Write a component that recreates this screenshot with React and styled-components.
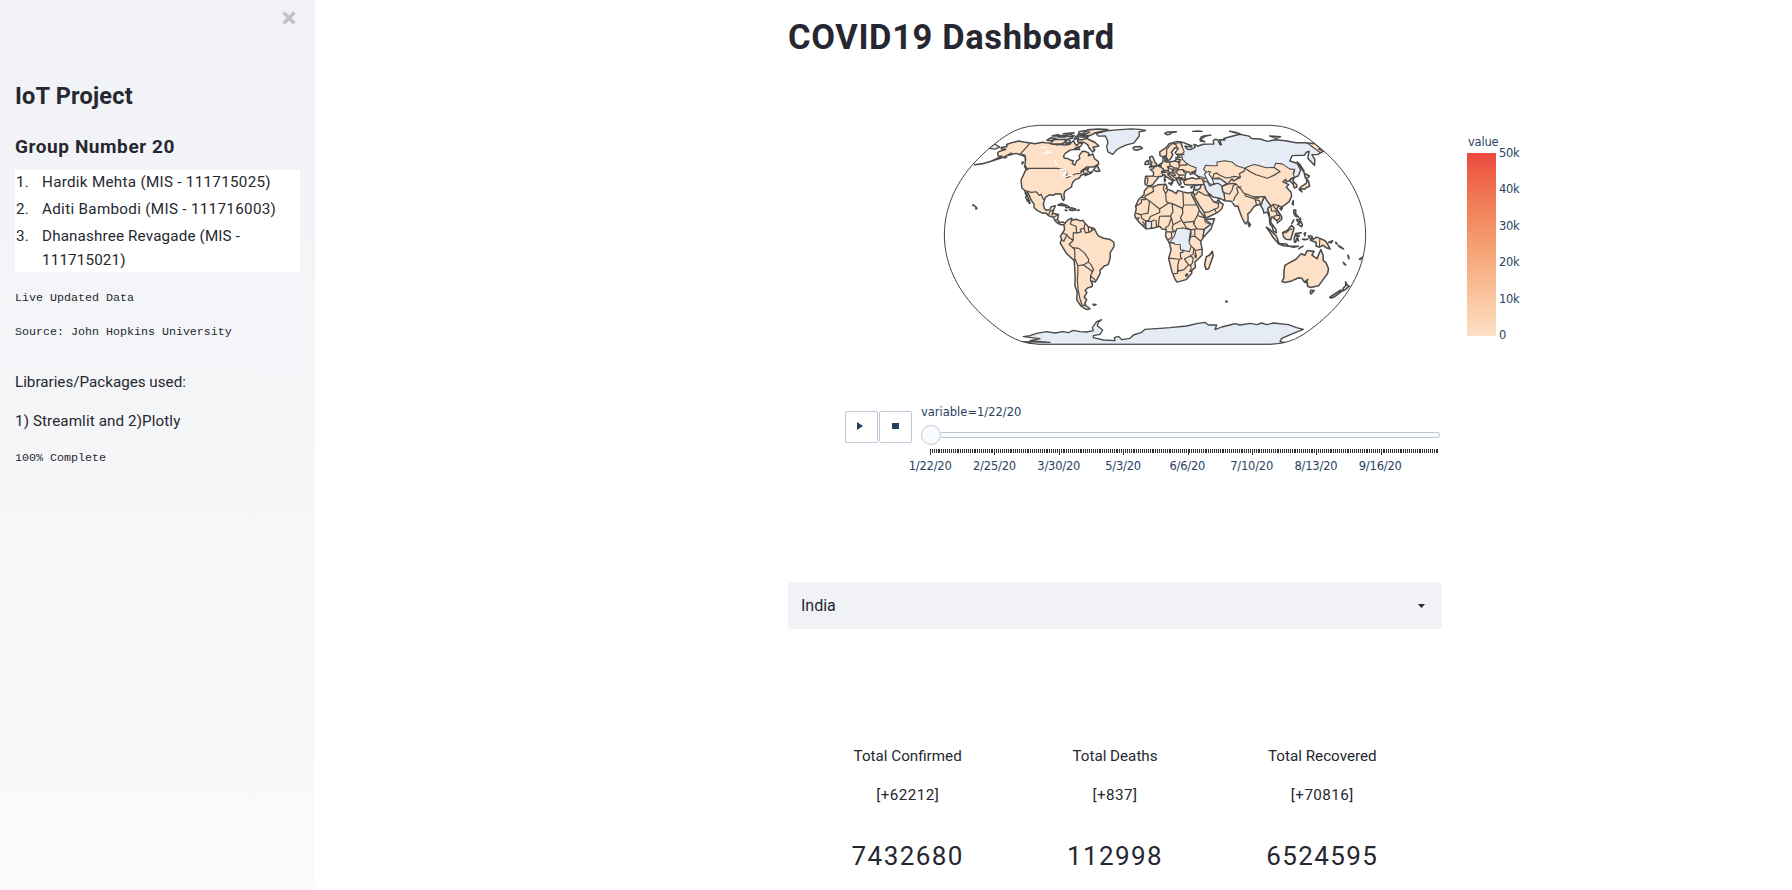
import React from "react";
import styled, { createGlobalStyle } from "styled-components";

const GlobalStyle = createGlobalStyle`
  * { box-sizing: border-box; }
  html, body { margin: 0; padding: 0; background: #fff; }
  body {
    font-family: Roboto, "Noto Sans", sans-serif;
    font-size: 16px;
    color: #262730;
    overflow: hidden;
  }
`;

const Page = styled.div`
  display: flex;
  height: 890px;
  width: 1792px;
`;

/* ---------- sidebar ---------- */

const Sidebar = styled.aside`
  width: 315px;
  padding: 11px 15px 0;
  background: linear-gradient(#f0f2f6, #fafafa);
  display: flex;
  flex-direction: column;
`;

const CloseButton = styled.button`
  align-self: flex-end;
  width: 14px;
  height: 14px;
  margin-right: 4px;
  padding: 0;
  border: 0;
  background: none;
  display: flex;
`;

const SideTitle = styled.h1`
  margin: 55px 0 0;
  font-size: 23.5px;
  line-height: 32px;
  font-weight: 700;
  letter-spacing: 0.2px;
`;

const SideSubtitle = styled.h2`
  margin: 21px 0 0;
  font-size: 19px;
  line-height: 28px;
  font-weight: 700;
  letter-spacing: 0.58px;
`;

const Members = styled.ol`
  list-style: none;
  counter-reset: member;
  margin: 9px 0 0;
  padding: 0;
  height: 102px;
  background: #fff;
`;

const Member = styled.li`
  counter-increment: member;
  display: flex;
  font-size: 15.2px;
  line-height: 24px;
  margin-bottom: 3px;
  letter-spacing: ${(p) => p.$track || 0}px;
  &::before {
    content: counter(member) ".";
    width: 26px;
    padding-left: 1px;
    flex: none;
  }
`;

const Mono = styled.p`
  margin: ${(p) => p.$top}px 0 0;
  font-family: "Liberation Mono", monospace;
  font-size: 11.67px;
  line-height: 18px;
`;

const SideText = styled.p`
  margin: ${(p) => p.$top}px 0 0;
  font-size: 15.2px;
  line-height: 24px;
  letter-spacing: ${(p) => p.$track || 0}px;
`;

/* ---------- main column ---------- */

const Main = styled.main`
  width: 654px;
  margin-left: 473px;
  flex: none;
  display: flex;
  flex-direction: column;
`;

const Title = styled.h1`
  margin: 14px 0 0;
  font-size: 34.5px;
  line-height: 46px;
  font-weight: 700;
  letter-spacing: 0.62px;
`;

const ChartRow = styled.div`
  display: flex;
  align-items: flex-start;
  width: 760px;
  height: 345px;
  padding: 55px 0 0 152px;
`;

const WorldMap = styled.svg`
  display: block;
  flex: none;
`;

const Legend = styled.div`
  margin: 19px 0 0 97px;
  display: flex;
  flex-direction: column;
  color: #2a3f5f;
  font-family: "DejaVu Sans", sans-serif;
  font-size: 11.5px;
`;

const LegendTitle = styled.div`
  line-height: 16px;
  padding-left: 1px;
  letter-spacing: -0.2px;
`;

const LegendBody = styled.div`
  display: flex;
  margin-top: 3px;
`;

const ColorBar = styled.div`
  width: 29px;
  height: 183px;
  background: linear-gradient(
    to top,
    #fde0c5, #facba6, #f8b58b, #f59e72, #f2855d, #ef6a4c, #eb4a40
  );
`;

const Scale = styled.div`
  height: 196px;
  margin: -7px 0 0 3px;
  display: flex;
  flex-direction: column;
  justify-content: space-between;
  line-height: 14px;
  letter-spacing: -0.3px;
`;

const Controls = styled.div`
  display: flex;
  height: 78px;
  margin: 0 0 0 57px;
  width: 605px;
`;

const PlayButton = styled.button`
  width: 33px;
  height: 32px;
  margin: 6px 1px 0 0;
  padding: 0 ${(p) => p.$shift}px 3px 0;
  flex: none;
  border: 1px solid #bec8d9;
  border-radius: 2px;
  background: #fff;
  display: flex;
  align-items: center;
  justify-content: center;
`;

const Timeline = styled.div`
  margin-left: 8px;
  width: 519px;
  flex: none;
  color: #2a3f5f;
  font-family: "DejaVu Sans", sans-serif;
  font-size: 11.5px;
  display: flex;
  flex-direction: column;
`;

const Current = styled.div`
  line-height: 14px;
  height: 20px;
`;

const Track = styled.div`
  height: 20px;
  display: flex;
  align-items: center;
`;

const Knob = styled.div`
  width: 20px;
  height: 20px;
  flex: none;
  border: 1px solid #bec8d9;
  border-radius: 50%;
  background: #f8fafc;
`;

const Rail = styled.div`
  flex: 1;
  height: 6px;
  border: 1px solid #bec8d9;
  border-left: 0;
  border-radius: 0 3px 3px 0;
  background: #f8fafc;
`;

const Ticks = styled.svg`
  display: block;
  margin-top: 4px;
  flex: none;
`;

const Dates = styled.div`
  display: flex;
  margin: 4px 0 0 -23px;
  line-height: 14px;
  letter-spacing: -0.2px;
`;

const DateLabel = styled.span`
  width: 64.3px;
  flex: none;
  display: flex;
  justify-content: center;
`;

const Select = styled.div`
  margin-top: 99px;
  height: 47px;
  padding: 0 17px 0 13px;
  border-radius: 4px;
  background: #f0f2f6;
  display: flex;
  align-items: center;
  justify-content: space-between;
`;

const Stats = styled.div`
  display: grid;
  grid-template-columns: repeat(3, 1fr);
  padding: 0 16px;
  margin-top: 115px;
`;

const Stat = styled.div`
  display: flex;
  flex-direction: column;
  align-items: center;
  font-size: 15.2px;
`;

const StatLabel = styled.div`
  line-height: 24px;
`;

const StatDelta = styled.div`
  margin-top: 15px;
  line-height: 24px;
  letter-spacing: 0.45px;
`;

const StatTotal = styled.div`
  margin-top: 29px;
  font-size: 26px;
  line-height: 40px;
  letter-spacing: 1.4px;
`;

/* ---------- world map ---------- */

// Natural Earth projection; one map unit is a third of a pixel.
const K = 231;
const project = (lon, lat) => {
  const l = (lon * Math.PI) / 180;
  const p = (lat * Math.PI) / 180;
  const p2 = p * p;
  const p4 = p2 * p2;
  const x = l * (0.8707 - 0.131979 * p2 + p4 * (-0.013791 + p4 * (0.003971 * p2 - 0.001529 * p4)));
  const y = p * (1.007226 + p2 * (0.015085 + p4 * (-0.044475 + 0.028874 * p2 - 0.005916 * p4)));
  return [645 + K * x, 359.5 - K * y];
};

const toPath = (text, closed = true) =>
  text
    .split(";")
    .map((part) => {
      const pts = part.trim().split(/\s+/).map((s) => project(...s.split(",").map(Number)));
      return "M" + pts.map(([x, y]) => x.toFixed(1) + " " + y.toFixed(1)).join("L") + (closed ? "Z" : "");
    })
    .join("");

const meridian = (lon, from, to) => {
  const out = [];
  const n = 60;
  for (let i = 0; i <= n; i++) out.push(lon + "," + (from + ((to - from) * i) / n));
  return out.join(" ");
};
const FRAME = toPath(meridian(-180, -90, 90) + " " + meridian(180, 90, -90));

const AMERICAS =
  "-168,65.7 -163,66.6 -166,68.3 -161,70.3 -156.6,71.3 -150,70.5 -141,69.6 -135,69 -128,70.2 -124,69.8 -120,69.6 -115,68.8 -108,67.9 -108,68.5 -101,67.8 -96,68.2 -94,71.8 -91,69.6 -87,67.3 -85.5,69.8 -81.5,69 -82,66.5 -87,65 -87,64.2 -91,63.5 -94,61 -94.6,58.8 -92.5,57 -88,56.5 -85,55.3 -82.2,54.9 -82.2,52.9 -79,51.5 -78.9,54.6 -76.6,56.5 -78.5,59 -77.5,62.5 -73.5,62.3 -69.6,61 -69,58.9 -65,60.3 -61.5,56.5 -57,54.5 -55.7,52.3 -60,50.2 -66.5,50.2 -71,46.9 -64.5,49.1 -65,47.2 -61.5,45.8 -60,46.8 -60.5,45.6 -65.8,43.6 -66,44.6 -64.5,45.5 -67,44.8 -70,43.7 -70.5,42 -74,40.6 -75.5,39 -76,37 -75.7,35.4 -78,33.9 -81,32 -81.3,30 -80.1,26.8 -80.6,25.2 -81.8,26.2 -82.8,28 -84,30 -89,30.3 -90,29.2 -94,29.5 -97.2,27.6 -97.8,22.5 -96,19.2 -94.5,18.2 -91.5,18.5 -90.5,20.8 -87,21.4 -88,18.3 -88.8,15.9 -83.3,15 -83.7,11 -81.5,9 -79.5,9.6 -77.3,8.6 -75,10.8 -71.7,12.4 -71.5,10.8 -68,11.5 -64,10.3 -61.8,10.7 -60,8.5 -57,6 -52,4.8 -50,1.5 -48.5,-0.8 -44,-2.5 -39,-3.2 -35.3,-5.3 -35,-8.5 -38.5,-13 -39,-17.8 -41,-22 -44.5,-23 -48.5,-26 -48.7,-28.5 -52.5,-33 -54,-34.7 -58,-34 -57,-36.5 -58,-38.2 -62,-39 -65,-41 -63.8,-42.5 -67.5,-46 -65.8,-47.8 -69,-51 -68.3,-52.5 -65.3,-54.8 -69,-55.5 -73.5,-52.5 -75.5,-48 -72.7,-42 -73.5,-37.5 -71.5,-31 -70.2,-19 -76.2,-14 -81.2,-6 -79.8,-3 -80.9,-1 -78.8,1.5 -77.3,4 -78,7.4 -80.3,7.4 -83,8.3 -85.7,10.2 -87.6,13 -91.5,14 -94.5,16.2 -97,15.9 -101.8,17.8 -105.5,20.2 -105.8,22.5 -109.3,25.7 -112.8,30 -114.7,31.7 -114.7,30.2 -112.8,27.8 -111,25.5 -109.5,23.2 -110.2,23.2 -112.2,25.8 -112.2,24.8 -114.8,27.7 -114.1,28.7 -116,30.5 -117.2,32.6 -120.6,34.5 -122.5,37.5 -124.3,40.4 -124.6,48.3 -122.8,48.3 -127.5,51 -130.3,54.6 -133.5,58 -138,59.3 -146,60.8 -151.8,59.3 -151,61 -156,57.4 -164.5,54.6 -158,58.6 -162,58.7 -165.5,61 -166,62 -161,64.2 -166.5,64.6";

const AFRICA =
  "-5.9,35.8 -2,35.1 3,36.9 10,37.3 11,35 10,34 15.2,32.3 19,30.3 20.5,32.7 25,31.6 29,30.8 32.3,31.2 34.2,31.3 32.5,29.8 35.5,24 37.3,21 38.5,18 43,12.5 43.3,11.5 51.2,11.9 48,4.5 41.6,-1.6 39,-5 40.6,-11 40.6,-15 34.8,-20 35.5,-24 32.7,-26 32.5,-28.5 28,-33 20,-34.8 18.2,-33 15,-27 11.8,-17.5 13.8,-11 12.2,-6 9,-1 9.7,4 6,4.3 4,6.3 -2,4.8 -7.6,4.4 -13.2,8.9 -16.8,12.5 -17.5,14.7 -16.3,19 -17,21 -14.5,26 -9.8,29.5 -9.5,32.5";

const EURASIA =
  "-9.4,38.8 -8.8,43.2 -1.7,43.4 -1.2,46 -4.7,48.4 -1.5,48.7 -1.7,49.7 2,51 4.5,52.2 8,53.8 8.2,57 10.6,57.7 9.8,55 11,54 14,54 19,54.5 21,55.5 21.5,57.5 24.3,57.3 23.5,59.2 30,60 25,60.2 22.5,60 21.3,61.5 25.3,65 22,65.7 17.2,61.5 18.8,60 16.5,57 14.2,55.4 12.9,55.5 11,59 8,58 5.2,59 5,62 12,65.5 16,69 25.5,71 31,70.3 41,67 40,66.2 33,66.7 35,64.3 38,64 40.5,64.7 44,66 43.5,68.3 46,67.8 47,66.8 54,68.5 60,68.6 66,68.8 67,71.5 70,73 72.8,72.5 72.5,68 74,68 75,72.5 81,72.2 81,73.6 87,74.8 104,77.6 113,75.8 113.5,73.6 123,73.1 129,71 140,72.5 150,71.5 160,69.8 170,69.8 180,69 180,65 177,64.5 179,62.5 170,60 163.5,59.8 162,56 156.8,51.2 156,57 164,62.5 160,61.7 155,59.3 142,59 135.5,54.8 141,53 140.5,48 135,43.5 130.7,42.3 127.5,39.8 129.4,37 129,35.2 126.3,34.5 126.5,37 125,39.7 121.2,39 121.7,40.9 118,39 122.4,37 119.2,35 121.9,31.5 121.5,28.5 118,24.5 114,22.3 110,20.4 108,21.6 105.7,19 109.2,13.5 109,11.5 105,8.7 104.8,10.5 102.2,12.2 100.9,13.4 99.9,12 99.3,9.3 103.4,4 103.8,1.4 101,2.9 100.3,6 98.4,8 98.5,13 97.3,16.8 94.2,16 94,18.5 91.8,22.5 87,21.3 85,19.5 82,16.5 80.2,15.5 80.2,13 79.8,10.3 77.5,8 76.3,10 74.8,13 72.8,19 72.5,21.2 70,21 69,22.3 67,24.8 61.5,25.1 57,27 51.5,27.9 48.8,30.3 48,29.5 50,26.5 51.5,24.6 54,24.1 56.3,26.2 56.7,24.2 59.8,22.5 57.8,19 55,17 52,15.6 45,12.8 43.4,12.8 42.5,16.5 39,21.3 35,28 34.9,29.5 34.2,31.3 36,36 36,36.8 30.6,36.7 27.3,37 26.2,39.4 29.5,40.8 31.5,41.3 35,42 38.5,41 41.5,41.6 39,44 37,45.2 39,47.2 35,46.2 36.5,45.3 33.5,44.5 33,46.1 30.8,46.6 28.8,44.8 28,42.2 29,41.2 26,40.7 23,40.4 24,37.8 22.5,36.5 21,38.5 19.4,41.5 14,45 12.3,45.4 12.4,44.2 16,41.5 18.4,40 16.8,40.5 16,38 15.6,40.1 10.5,42.8 8.8,44.4 6,43 3,43 3,41.8 -0.3,39 -2,36.7 -5.6,36 -9,37";

const ISLANDS = [
  // Canadian Arctic and Atlantic
  "-117,69 -113,68.6 -105,69 -102,70 -105,73 -110,72.7 -117,73 -118,71",
  "-125,72 -120,71.5 -116,73.5 -123,74.3",
  "-101,69.6 -96,69.5 -98,71.5 -102,72.8 -97,73.8 -103,73",
  "-90,72.5 -88,70.5 -80,70 -75,68 -72,65.5 -66,62 -64.5,63.5 -68,66 -62,67 -68,70 -77,72.7 -81,73.7 -85,72.5",
  "-87,64 -81,64 -84,66",
  "-95,75.2 -80,74.8 -80,76 -92,77",
  "-116,75 -107,75 -105,76.3 -115,76.5",
  "-104,75.5 -98,75 -98,76.5",
  "-94,77.5 -96,80 -90,81.3 -88,78.3",
  "-113,78 -103,77.6 -101,79",
  "-124,76 -117,76 -118,77.3",
  "-94,73 -90,73.8 -95,74",
  "-99,68.8 -95,68.9 -97,69.4",
  "-90,76.5 -78,76.5 -75,78.8 -64,81.5 -62,82.6 -75,83.1 -88,82.2 -90,80.4 -82,79.5",
  "-59.3,47.7 -57,51.5 -55.6,50 -52.8,47 -56,46.8",
  "-128,50.8 -123.5,48.4 -125.5,49",
  "-132.8,54 -131.5,53.8 -131.5,52.4",
  "-154,57.8 -152.3,58 -153.5,57",
  "-178,51.8 -172,52.4 -168,53.3 -165,54.3 -170,52.8",
  // Caribbean
  "-84.9,21.9 -82,23.1 -77,21.7 -74.3,20.2 -77.5,19.9 -78.5,21.5",
  "-74.4,18.4 -73,19.9 -69,19 -68.5,18.3 -71.5,17.9",
  "-78,18.3 -76.4,17.9 -77.5,17.9",
  "-67,18.4 -65.7,18.3 -67,18",
  // Pacific and southern specks
  "-156,20.2 -154.9,19.5 -155.8,19.1",
  "-159.5,22 -157.8,21.4 -156.3,20.8 -158.2,21.5",
  "-61,-51.4 -58,-51.5 -60,-52.2",
  "68.8,-48.8 70.3,-49.2 69,-49.6",
  // Europe
  "-24,65.5 -22,66.4 -16,66.5 -13.7,65 -18.5,63.5 -22.5,63.9",
  "-5.5,50 -3,51.4 -5,52 -3,53.5 -5,55 -5.5,58 -3,58.5 -1.8,57.4 0,53.5 1.6,52.5 1,51.1",
  "-10,52 -9.5,54 -7,55.2 -6,53.5 -6.5,52.2",
  "12.5,38 15.5,38.2 15,36.7",
  "8.5,40.8 9.7,40.5 9,39",
  "8.7,42.4 9.4,42.8 9.3,41.5",
  "23.7,35.5 26.2,35.2 24,35",
  "32.4,35 34.4,35.6 33,34.6",
  "11.5,55.8 12.5,56 12,54.8 11,55.2",
  "12,78.5 16,79.9 27,80 20,79 18,77.5 15,77",
  // Asia
  "80,9.7 81.8,7.5 80.7,6 79.8,8",
  "108.7,19.5 111,20 109.6,18.3",
  "120.2,23 121.8,25.2 120.9,22",
  "130,33.2 132,31.6 131,34 135.5,33.6 137,34.7 140.8,35.8 142,39.6 141,41.3 139.8,38.5 136.8,37 133,35.4 131,34.3",
  "140.3,41.8 143,42 145.3,43.3 141.8,45.4 141,43",
  "120.5,18.4 122.2,18.3 121.5,15.5 123.8,13 121,13.8 120,16",
  "122,11.5 123.3,10.9 125.2,12.3 125,10.3 123.2,9.3 122,10.5",
  "122,7.7 125.5,9.6 126.3,7 125.4,5.8 124,7",
  "117.3,8.4 119.4,11 118.5,9.6",
  "109,1.5 113,3.2 117,7 119,5 117.5,1 116,-3.7 112,-3.3 110,-1.5",
  "95.3,5.6 98.5,3.8 103.8,-1 106,-5.8 104,-5 101,-2 98.5,1.7",
  "105.2,-6.5 108.5,-6.6 112.8,-6.8 114.5,-8.4 110,-8.1",
  "115,-8.4 119,-8.5 123,-8.5 119,-9.2",
  "123.5,-10.3 127,-8.4 125,-9.3",
  "119.4,-5.4 119,-2.5 120.2,1 125,1.6 121,0.5 121,-0.8 123.4,-0.7 121.7,-2 122.8,-4.6 121,-3 120.4,-5.5",
  "127.5,1 128.7,1.5 128,-0.7",
  "126,-3.3 130.7,-3.2 128,-3.6",
  // Oceania
  "131,-0.8 134,-0.8 135,-3.3 138,-1.7 141,-2.6 145.5,-4.4 147.5,-6.5 150.5,-10.5 147,-9.5 144,-7.7 141,-9.1 138,-8.3 138,-5.7 133,-4 134,-2.5 132,-2.5",
  "148.5,-5.7 152,-4.3 151,-5.9",
  "154.7,-5.4 156,-6.8 155,-6.4",
  "157,-7.8 160,-9.2 162,-10.5 159,-9.3",
  "164,-20.2 167,-22.3 165.5,-21.8",
  "166.6,-14.8 167.4,-16 168.3,-17.7 167,-16.2",
  "177.3,-18 179.8,-16.4 178.6,-18.1",
  "113.7,-22.5 114,-26.5 115.7,-31.7 115,-34.3 118,-35 123.6,-33.9 129,-31.6 132,-32 135.5,-34.8 137.8,-32.8 137,-35.2 138.3,-35 140,-37.8 143.5,-38.8 147,-38 150,-37.4 151.5,-33 153.4,-28.5 152.8,-25 149,-20.5 146,-18.8 145.3,-15.2 142.5,-10.8 141.5,-14 140.5,-17.6 135.5,-15 136.9,-12.2 131,-11.5 129.5,-15 126,-14 122.3,-18 117,-20.7",
  "144.7,-40.8 148.3,-41 147,-43.6 145.5,-42.5",
  "172.8,-34.5 175.5,-36.8 178.4,-37.8 176.5,-40.3 175,-41.5 173.8,-39.3 174.8,-37.5",
  "172.7,-40.6 174,-41.8 170.8,-45.8 168.5,-46.6 166.6,-46",
  "49.3,-12.1 50.3,-15.5 47.2,-25 45,-25.5 43.4,-22 44.3,-16.3 47.5,-14.7",
];

const NO_DATA_ISLANDS = [
  "-73,78.2 -68,75.8 -60,76 -55,72 -53,69 -53.5,67 -50,62 -44,60 -41,64 -37,66 -31,68.2 -24,69.5 -22,72 -19,76 -20,80 -12,81.5 -20,82.7 -32,83.5 -50,82.3 -62,81.2",
  "-180,69 -175,67.3 -170,66 -173,64.4 -180,65",
  "52,71.3 55,73.5 60,75.5 68,76.8 60,76.2 55,75 52,72.5 57,70.7",
  "95,80.8 100,79 105,78.3 100,80",
  "138,76 150,75.2 142,73.6",
  "142,46 142.2,54.2 143.3,52 143,47",
  "48,80.6 60,80.5 55,81",
];

const LAKES = "47,45 51,46.8 53,46.5 51,44.5 53,42 53.8,39 53.8,37 50,37.5 48.8,40 47.5,43";

const NO_DATA_AREAS = [
  "29,73 30,66 31,62 27.7,59.8 28,56 31,53 35,51 40,49.5 39,47 37,44 40,43.3 48,41.5 49,46 47,48.5 50,51.5 55,51 61,51 62,54 70,55 77,54 80,51 87,49.2 92,50.7 98,52 102,51.3 108,49.5 116,49.8 120,53 126,52.5 130.5,48.5 135,48.4 131,44.5 130.7,42.3 145,40 180,50 180,85 28,85",
  "44.5,39.5 48,39.5 50,36 54,37.3 58,38 61,36.5 60.6,33 61.8,31 61.5,25 57,25 51,27 48.5,30 46,33",
  "36,36 42,37 41,34.5 38.8,33.3 36,33",
  "92.5,21.5 94,24 97.5,28 98.7,25 101,21.5 98,19.5 98.7,15 98,10 93,16",
  "124.5,40 130.7,42.3 128,38.5 125,37.8",
  "52.5,37.5 54,41.5 60,42 66,37.5 61,36 58,38",
];

const NO_DATA_AFRICA = [
  "12.5,-5.8 16.5,-1 18.5,4.5 24,5 30,3.8 31,1 29.3,-3 29.3,-6 31,-8.5 29.5,-12.5 25,-11.5 22,-11 21.5,-7.2 17,-7 16,-5.8",
  "-8.4,4 -8,10 -3,9.8 -3,5",
  "43,11.5 48,8 42,4 41,-1.6 49,2 52,12",
];

const AMERICA_BORDERS =
  "-123,49 -95,49 -88,48.2 -84,46.2 -82.5,42 -79,43.3 -75,45 -71,45.3 -69,47.4 -67.8,45.7 -67,45;-141,69.6 -141,60.3 -135,59.5 -130,55;-117,32.6 -111,31.3 -106.5,31.7 -103,29 -101.5,29.8 -99,26.5 -97.2,25.9;-92,14.5 -91,17.5 -88.5,18.2;-89.3,14.4 -88,15.8;-87.5,13 -83.3,15;-85.7,11 -83.7,11;-83,8.3 -82.5,9.5;" +
  "-77.3,8.6 -77,7.5;-71.5,11.5 -72.5,8 -67.5,6.2 -67,1.2 -69.8,1.7 -70,-4.2 -73.5,-2 -75.3,0 -78.8,1.4;-67,1.2 -63,2.2 -64,4 -60.7,5 -60,8.3;-60.7,5 -59.5,1.5 -56,2 -52,4.3;-57.2,5.8 -56.5,2;-54,5.7 -54.5,2.3;-80.2,-3.5 -78,-4.8 -75.3,0;-70,-4.2 -73.5,-7 -70.6,-9.5 -69,-11 -69.5,-17.5 -70.4,-18.3;-70.6,-9.5 -65.4,-10 -60.5,-13.7 -57.6,-18 -58,-20 -55.8,-22.3 -54.3,-25.6 -57.6,-30.2 -53.4,-33.7;-69.5,-17.5 -67.5,-22.8 -62.6,-22.2 -58.2,-20;-62.6,-22.2 -57.7,-25.3 -55.5,-27.4 -54,-25.6;-57.6,-30.2 -58.4,-34;-67.5,-22.8 -68.5,-28 -70,-33 -71.3,-40 -72,-47 -72,-52 -68.5,-52.4";

const AFRICA_BORDERS =
  "-2,35.1 -1.3,32 -8.7,28.7 -8.7,27.3 -13,27.6;-8.7,27.3 -8.7,26 -12,26 -12,23.5 -17,21;-8.7,27 -4.8,25 -6,16 -12,15;8.5,37 7.5,33.8 9.5,30.2 11.5,33;9.5,30.2 10,24.5 12,23.5 4,19 -4.8,25;12,23.5 15,23 24,19.5 25,22 25,31.6;25,22 37,22;15,23 15.5,17 13.5,14 4,13.7 3.5,11.7;4,19 4,16.5 0,15 -4,13.5 -5.5,10.5 -8,10.2 -11.5,12.3 -12.2,14.7 -16.3,16;24,19.5 24,15.7 22,12.7 23,10.8 15.5,7.5 14,12.8;23,10.8 27,5 31,3.7 34,4.3 36,4.4 42,4;24,9 33,10 34,8;38.5,18 36.5,14.3 34,10.5 33,8 36,4.4;36.5,14.3 42.5,12.5;43,11 42.7,10.5 44,9 48,8 42,4 41,-1.5;34,4.3 34,-1 39.3,-4.7;34,-1 30,-1.3;30.8,-1 29.2,-4.5;30.8,3.5 29.5,-1.5;3.6,12 2.7,6.3;1,11 1.2,6;-3,9.8 -3,5;0,11 -3,10;-8,10.2 -7.6,4.4;-11,10 -8.5,7.5 -11.5,6.9;-15,10.8 -13.7,12.6 -16.8,12.4;4,13.7 13.5,13.8 14,12.5 11.8,7 8.6,4.8;15.5,7.5 14.7,5 16,2.2 18.6,3.5;9.8,2.2 16,2.2;14,2.2 14.3,-2 11,-3.8;16.5,-6 13,-6;12,-17.2 21,-18 23.3,-17.6 22,-16 22,-13 24,-13 24,-11;25.3,-17.8 30.4,-15.6 33,-14 33.3,-10 31,-8.5;33.3,-10 35,-11.6 40.4,-10.5;34.5,-12 35.8,-16 35,-17 34.3,-14.3;30.4,-15.6 33,-17 32.8,-20.5 31.3,-22.3 29.4,-22.2 25.3,-17.8;31.3,-22.3 32,-26.8 32.8,-26.8;29.4,-22.2 25.5,-25.7 20.8,-26.8 20,-24.8 20,-28.4 16.5,-28.6;20,-24.8 20,-22 21,-18.2;27,-29.6 28.5,-28.6 29.4,-29.6 28,-30.6 27,-29.6;31,-26 32,-27 30.8,-27 31,-26";

const EURASIA_BORDERS =
  "-8.8,41.9 -6.5,41.6 -7.3,37.2;-1.7,43.3 3,42.4;2.5,51 6,49.5 8.2,49 7.5,47.6 6,46.3 7.5,43.8;6,49.5 6,51.8 7,53.3;3.4,51.4 6,51;7.5,47.6 13,47.5 13,49 12,50.3 15,51 14.3,54;9,54.8 9.9,54.8;10,47.4 7,46 9,46 13.7,46.5 13.7,45.6;12,50.3 15,49 17,48 19,49.4 22.5,49.1 24,50.5 23.6,52.5 23,54.3 20,54.4;15,51 19,49.5;16,47 18.8,47.8 22.8,48.2 20.3,46.2 16.5,46.3;13.7,45.5 16.5,46.4;15.8,45.2 19,45 19.2,43.5 16.5,44.2;20.3,46.2 21.5,44.7 22.7,44.1 27.5,44;22.7,44.2 22.5,42.3 26.3,41.8;20,42 22.5,42.3;20.5,41 23,41.3 26,41.3;19.4,42 20.5,41 20,39.7;22.8,48.2 26.6,48.2 28.2,45.5;27,48.3 30,46.4;24,51.7 31,51.5 31.5,53;21,56.2 26.5,55.7 23,54;24.4,57.8 27.5,57.5;25.5,54.2 23.6,53;12,59 12.5,64 18,68.5 20.5,69 29,70;24,65.8 23.5,68 21,69;29,70 30,66;" +
  "41.5,41.5 43.5,41.1 44.5,39.7 44.8,37.2 36.5,36.7;43.5,41 46.5,41.3;45,39.7 46.5,38.9;42.4,37.1 41,34.4 38.8,33.3 35.8,32.7;38.8,32 37,30 35,29.4;39,32 44.7,29.2 47.5,29;48.4,28.5 46.5,29;42.8,16.5 47,17 52,19 53,16.6;52,19 55,20 55.7,23 51.5,24.2;55.7,23 56,24.5;45,37 46,33 48,30;61,35.5 60.8,31.3 66.3,29.9 69.5,33 71.5,36.5 74.8,37.2;61.2,35.6 66.5,37.3 71.5,37.9 74.5,37.3;61.8,31 61.6,25.2;54,42 56,45 58.5,45.5 62,43.5 66,42 70,42.2 74,43 80,42.3 80,45 85.5,47 87.4,49.1;52.5,41.8 57,41.2 61,41.2 66.5,37.4;66.5,37.4 68,38.5 70.5,40.5 73.5,39.6 74,40.3 80,42.3;70.5,41 73,41;" +
  "87.4,49.1 91,46.5 95.5,44.3 105,41.7 112,43.8 119.7,46.7 116,49.8;74.5,37.2 78.5,32.5 79,31 88,27.9 97.5,28.2 98.7,25;68.2,23.7 71,28 74.5,31 74,34.5 78.5,35.5;80.2,30.2 80.5,28.7 88,26.4 88,27.9;88.8,27.2 92,26.8;88.8,22 88.5,26 92,25 92.3,22;93,22 94.5,25 97.3,28;98.7,25 101.2,21.3 104,22.5 108,21.6;101.2,21.3 98,19.5 98.7,15 99,10.5;101.2,21 101,17.7 104.7,17.5 105.5,14.5 102.5,13.6 102.9,11.7;102.5,22.4 105,19 107.5,15.5 107.5,12.4 104.5,10.4;105.5,14.4 107.5,14.5;100.2,6.5 102,6.2;124.3,40 128,42 130.6,42.4;126.6,37.8 128.4,38.6;131,44.8 135,48.4";

const ISLAND_BORDERS = "109.6,2 112,1.4 115.8,4.2 117.6,4.1;141,-2.6 141,-9.1;-72,19.7 -71.7,18;-7.8,54.2 -6,54.2";

const ANTARCTICA =
  "M245 680L330 682L270 677L300 671L275 668L250 665L270 662L290 655L320 650L345 654L370 650L385 653L400 646L420 650L440 651L460 647L457 638L470 620L485 614L475 622L472 632L488 645L480 658L460 662L460 668L490 675L525 677L523 668L536 664L545 674L570 670L580 660L605 652L615 643L660 640L690 638L740 633L770 626L795 622L805 630L830 630L825 644L845 636L870 630L885 626L900 630L930 625L950 629L965 624L980 629L1000 624L1045 629L1070 638L1090 643L1060 655L1025 670L1020 680L1040 683L1000 688L290 688Z";

const DATA = "#fde0c5";
const EMPTY = "#e5ecf6";

function Landmass({ id, outline, empty = [], borders }) {
  const d = toPath(outline);
  return (
    <g>
      <clipPath id={id}>
        <path d={d} />
      </clipPath>
      <path d={d} fill={DATA} stroke="none" />
      <g clipPath={`url(#${id})`}>
        {empty.map((area) => (
          <path key={area} d={toPath(area)} fill={EMPTY} />
        ))}
        <path d={toPath(borders, false)} fill="none" strokeWidth="3.6" />
      </g>
      <path d={d} fill="none" strokeWidth="4.4" />
    </g>
  );
}

function World() {
  return (
    <WorldMap width="430" height="235" viewBox="0 0 1290 705">
      <clipPath id="globe">
        <path d={FRAME} />
      </clipPath>
      <g clipPath="url(#globe)" stroke="#4a4a4a" strokeWidth="3.2" strokeLinejoin="round">
        <path d={ANTARCTICA} fill={EMPTY} strokeWidth="4" />
        <Landmass id="americas" outline={AMERICAS} borders={AMERICA_BORDERS} />
        <Landmass id="africa" outline={AFRICA} empty={NO_DATA_AFRICA} borders={AFRICA_BORDERS} />
        <Landmass id="eurasia" outline={EURASIA} empty={NO_DATA_AREAS} borders={EURASIA_BORDERS} />
        {NO_DATA_ISLANDS.map((d) => (
          <path key={d} d={toPath(d)} fill={EMPTY} strokeWidth="4" />
        ))}
        {ISLANDS.map((d) => (
          <path key={d} d={toPath(d)} fill={DATA} strokeWidth="4.6" />
        ))}
        <path d={toPath(ISLAND_BORDERS, false)} fill="none" />
        <path d={toPath(LAKES)} fill="#fff" />
        <path
          d="M305 97l14 1M310 115l20-3M320 108l12 4M345 135l5 16M358 163l16 1l8 12M368 186l8-16M376 186l12-5l12 2M878 262l16-4M968 150l4-10"
          stroke="#fff"
          strokeWidth="4"
          fill="none"
        />
      </g>
      <path d={FRAME} fill="none" stroke="#444" strokeWidth="3" />
    </WorldMap>
  );
}

/* ---------- page ---------- */

const DAYS = 269;
const DATES = ["1/22/20", "2/25/20", "3/30/20", "5/3/20", "6/6/20", "7/10/20", "8/13/20", "9/16/20"];
const TOTALS = [
  { label: "Total Confirmed", delta: "[+62212]", total: "7432680" },
  { label: "Total Deaths", delta: "[+837]", total: "112998" },
  { label: "Total Recovered", delta: "[+70816]", total: "6524595" },
];

export default function App() {
  return (
    <Page>
      <GlobalStyle />
      <Sidebar>
        <CloseButton aria-label="Close sidebar">
          <svg width="14" height="14" viewBox="0 0 14 14">
            <path d="M1.5 1.5L12.5 12.5M12.5 1.5L1.5 12.5" stroke="#bfc1c5" strokeWidth="3.4" />
          </svg>
        </CloseButton>
        <SideTitle>IoT Project</SideTitle>
        <SideSubtitle>Group Number 20</SideSubtitle>
        <Members>
          <Member $track={0.3}>Hardik Mehta (MIS - 111715025)</Member>
          <Member $track={0.32}>Aditi Bambodi (MIS - 111716003)</Member>
          <Member $track={0.16}>
            <span>
              Dhanashree Revagade (MIS -<br />
              111715021)
            </span>
          </Member>
        </Members>
        <Mono $top={17}>Live Updated Data</Mono>
        <Mono $top={16}>Source: John Hopkins University</Mono>
        <SideText $top={29}>Libraries/Packages used:</SideText>
        <SideText $top={15} $track={0.1}>1) Streamlit and 2)Plotly</SideText>
        <Mono $top={16}>100% Complete</Mono>
      </Sidebar>
      <Main>
        <Title>COVID19 Dashboard</Title>
        <ChartRow>
          <World />
          <Legend>
            <LegendTitle>value</LegendTitle>
            <LegendBody>
              <ColorBar />
              <Scale>
                {["50k", "40k", "30k", "20k", "10k", "0"].map((v) => (
                  <span key={v}>{v}</span>
                ))}
              </Scale>
            </LegendBody>
          </Legend>
        </ChartRow>
        <Controls>
          <PlayButton $shift={3} aria-label="Play">
            <svg width="6" height="8" viewBox="0 0 6 8">
              <path d="M0 0L6 4L0 8Z" fill="#2a3f5f" />
            </svg>
          </PlayButton>
          <PlayButton $shift={1} aria-label="Stop">
            <svg width="7" height="6" viewBox="0 0 7 6">
              <rect width="7" height="6" fill="#2a3f5f" />
            </svg>
          </PlayButton>
          <Timeline>
            <Current>variable=1/22/20</Current>
            <Track>
              <Knob />
              <Rail />
            </Track>
            <Ticks width="519" height="6" shapeRendering="crispEdges">
              {Array.from({ length: DAYS }, (_, i) => (
                <rect key={i} x={9 + i * 1.8935} y="0" width="1" height={i % 34 ? 4 : 6} fill="#333" />
              ))}
            </Ticks>
            <Dates>
              {DATES.map((d) => (
                <DateLabel key={d}>{d}</DateLabel>
              ))}
            </Dates>
          </Timeline>
        </Controls>
        <Select>
          <span>India</span>
          <svg width="7" height="4" viewBox="0 0 7 4">
            <path d="M0 0H7L3.5 4Z" fill="#262730" />
          </svg>
        </Select>
        <Stats>
          {TOTALS.map((s) => (
            <Stat key={s.label}>
              <StatLabel>{s.label}</StatLabel>
              <StatDelta>{s.delta}</StatDelta>
              <StatTotal>{s.total}</StatTotal>
            </Stat>
          ))}
        </Stats>
      </Main>
    </Page>
  );
}
